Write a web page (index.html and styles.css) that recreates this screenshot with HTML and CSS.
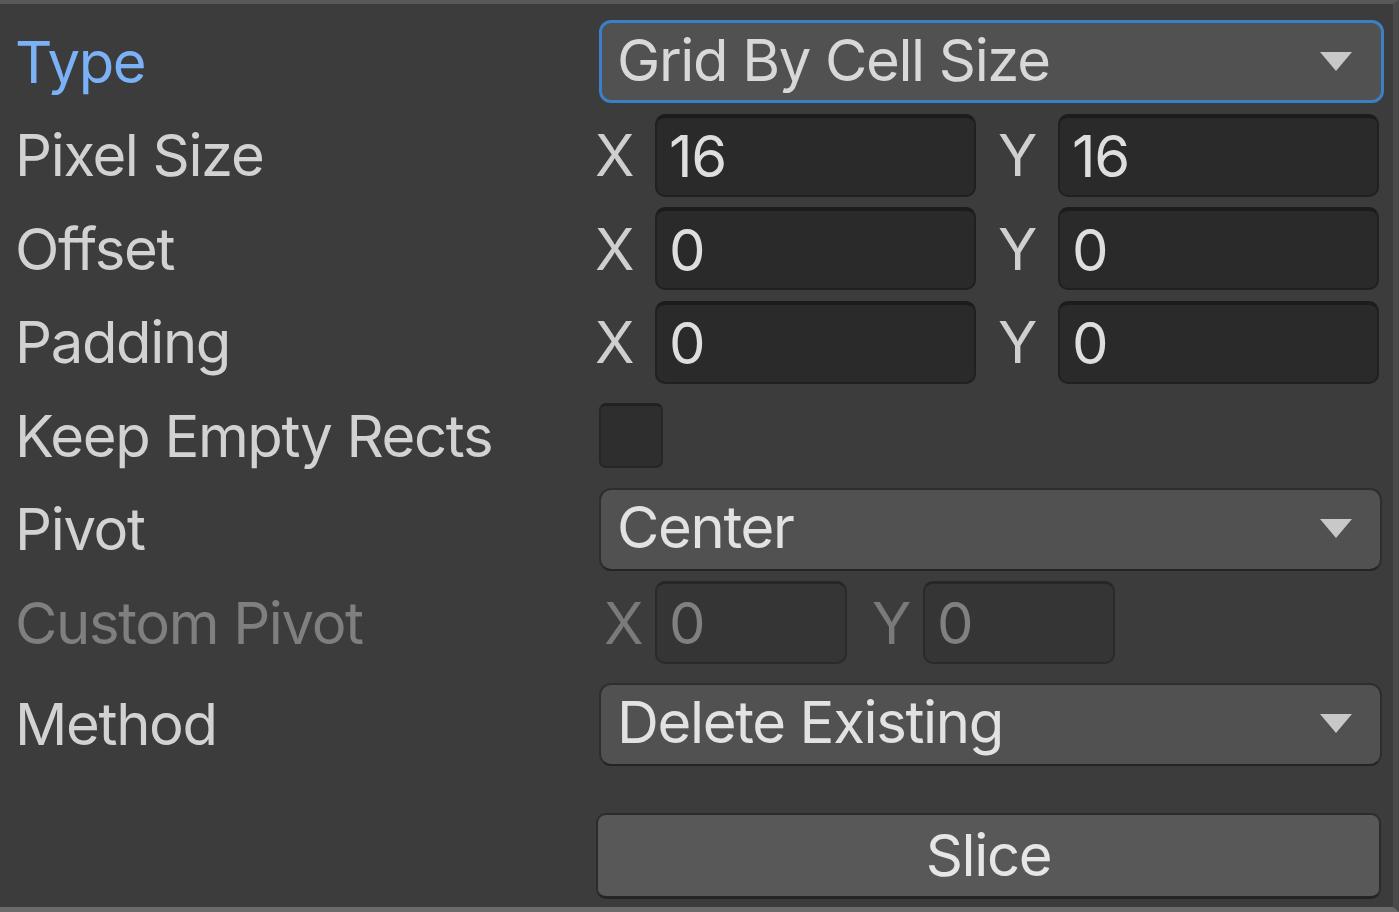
FILE: index.html
```html
<!DOCTYPE html>
<html>
<head>
<meta charset="utf-8">
<link rel="stylesheet" href="styles.css">
</head>
<body>
<div class="panel">
  <div class="row">
    <div class="label label-focus">Type</div>
    <div class="control">
      <div class="dropdown dropdown-focus">
        <span class="dd-text">Grid By Cell Size</span>
        <svg class="arrow" viewBox="0 0 32 20"><polygon points="0,1 32,1 16,20" /></svg>
      </div>
    </div>
  </div>
  <div class="row">
    <div class="label">Pixel Size</div>
    <div class="control vec">
      <div class="axis">X</div><div class="field">16</div>
      <div class="axis axis-y">Y</div><div class="field">16</div>
    </div>
  </div>
  <div class="row">
    <div class="label">Offset</div>
    <div class="control vec">
      <div class="axis">X</div><div class="field">0</div>
      <div class="axis axis-y">Y</div><div class="field">0</div>
    </div>
  </div>
  <div class="row">
    <div class="label">Padding</div>
    <div class="control vec">
      <div class="axis">X</div><div class="field">0</div>
      <div class="axis axis-y">Y</div><div class="field">0</div>
    </div>
  </div>
  <div class="row">
    <div class="label">Keep Empty Rects</div>
    <div class="control">
      <div class="checkbox"></div>
    </div>
  </div>
  <div class="row">
    <div class="label">Pivot</div>
    <div class="control">
      <div class="dropdown">
        <span class="dd-text">Center</span>
        <svg class="arrow" viewBox="0 0 32 20"><polygon points="0,1 32,1 16,20" /></svg>
      </div>
    </div>
  </div>
  <div class="row disabled">
    <div class="label">Custom Pivot</div>
    <div class="control vec-small">
      <div class="axis axis-dx">X</div><div class="field field-small">0</div>
      <div class="axis axis-dy">Y</div><div class="field field-small">0</div>
    </div>
  </div>
  <div class="row row-method">
    <div class="label">Method</div>
    <div class="control">
      <div class="dropdown">
        <span class="dd-text">Delete Existing</span>
        <svg class="arrow" viewBox="0 0 32 20"><polygon points="0,1 32,1 16,20" /></svg>
      </div>
    </div>
  </div>
  <div class="row row-slice">
    <div class="label"></div>
    <div class="control control-slice">
      <div class="button">Slice</div>
    </div>
  </div>
</div>
</body>
</html>
```

FILE: styles.css
```css
html, body {
  margin: 0;
  padding: 0;
  background: #3c3c3c;
}

body {
  width: 1399px;
  height: 912px;
  overflow: hidden;
  font-family: Inter, "Noto Sans", sans-serif;
  color: #d2d2d2;
  letter-spacing: -1.35px;
}

.panel {
  box-sizing: border-box;
  width: 1399px;
  height: 912px;
  border-top: 4px solid #585858;
  border-right: 6px solid #4a4a4a;
  border-bottom: 5px solid #6a6a6a;
  padding: 16px 0 0 15px;
  display: flex;
  flex-direction: column;
  gap: 10.5px;
}

.row {
  height: 83px;
  display: flex;
  align-items: center;
}

.row-method {
  margin-top: 8px;
}

.row-slice {
  margin-top: 37px;
  height: 86px;
}

.label {
  width: 584px;
  flex: none;
  font-size: 58px;
  line-height: 1;
  white-space: nowrap;
}

.label-focus {
  color: #7bb2f7;
}

.disabled .label {
  color: #7f7f7f;
}

.control {
  flex: none;
  width: 785px;
  height: 100%;
  display: flex;
  align-items: center;
}

.dropdown {
  box-sizing: border-box;
  width: 783px;
  height: 83px;
  background: #515151;
  border: 2px solid #2e2e2e;
  border-bottom-color: #242424;
  border-radius: 12px;
  display: flex;
  align-items: center;
  justify-content: space-between;
  padding: 0 28px 0 16px;
  font-size: 58px;
  color: #e2e2e2;
}

.dropdown-focus {
  width: 785px;
  border: 3px solid #3c7fc7;
  padding-left: 15px;
  padding-right: 29px;
  color: #d8d8d8;
}

.dd-text {
  line-height: 1;
  white-space: nowrap;
  padding-bottom: 4px;
}

.arrow {
  width: 32px;
  height: 20px;
  fill: #c8c8c8;
  filter: blur(0.6px);
  margin-bottom: 2px;
}

.vec {
  margin-left: -4px;
}

.axis {
  width: 60px;
  flex: none;
  font-size: 58px;
  line-height: 1;
  color: #cfcfcf;
}

.axis-y {
  margin-left: 22px;
}

.field {
  box-sizing: border-box;
  width: 321px;
  height: 83px;
  flex: none;
  background: #2a2a2a;
  border: 2px solid #202020;
  border-top: 4px solid #1c1c1c;
  border-radius: 10px;
  display: flex;
  align-items: center;
  padding: 0 0 0 12px;
  font-size: 58px;
  line-height: 1;
  color: #dedede;
}

.vec-small {
  margin-left: -4px;
}

.axis-dx {
  width: 51px;
  padding-left: 9px;
  color: #7a7a7a;
}

.axis-dy {
  width: 51px;
  margin-left: 25px;
  color: #7a7a7a;
}

.field-small {
  width: 192px;
  background: #353535;
  border: 2px solid #2a2a2a;
  border-top: 3px solid #262626;
  color: #808080;
}

.checkbox {
  box-sizing: border-box;
  width: 64px;
  height: 65px;
  background: #2e2e2e;
  border: 2px solid #262626;
  border-top: 3px solid #212121;
  border-radius: 7px;
}

.control-slice {
  margin-left: -3px;
}

.button {
  box-sizing: border-box;
  width: 786px;
  height: 86px;
  background: #585858;
  border: 2px solid #2c2c2c;
  border-bottom: 3px solid #252525;
  border-radius: 10px;
  display: flex;
  align-items: center;
  justify-content: center;
  font-size: 58px;
  line-height: 1;
  color: #e6e6e6;
  padding-bottom: 2px;
}
```
